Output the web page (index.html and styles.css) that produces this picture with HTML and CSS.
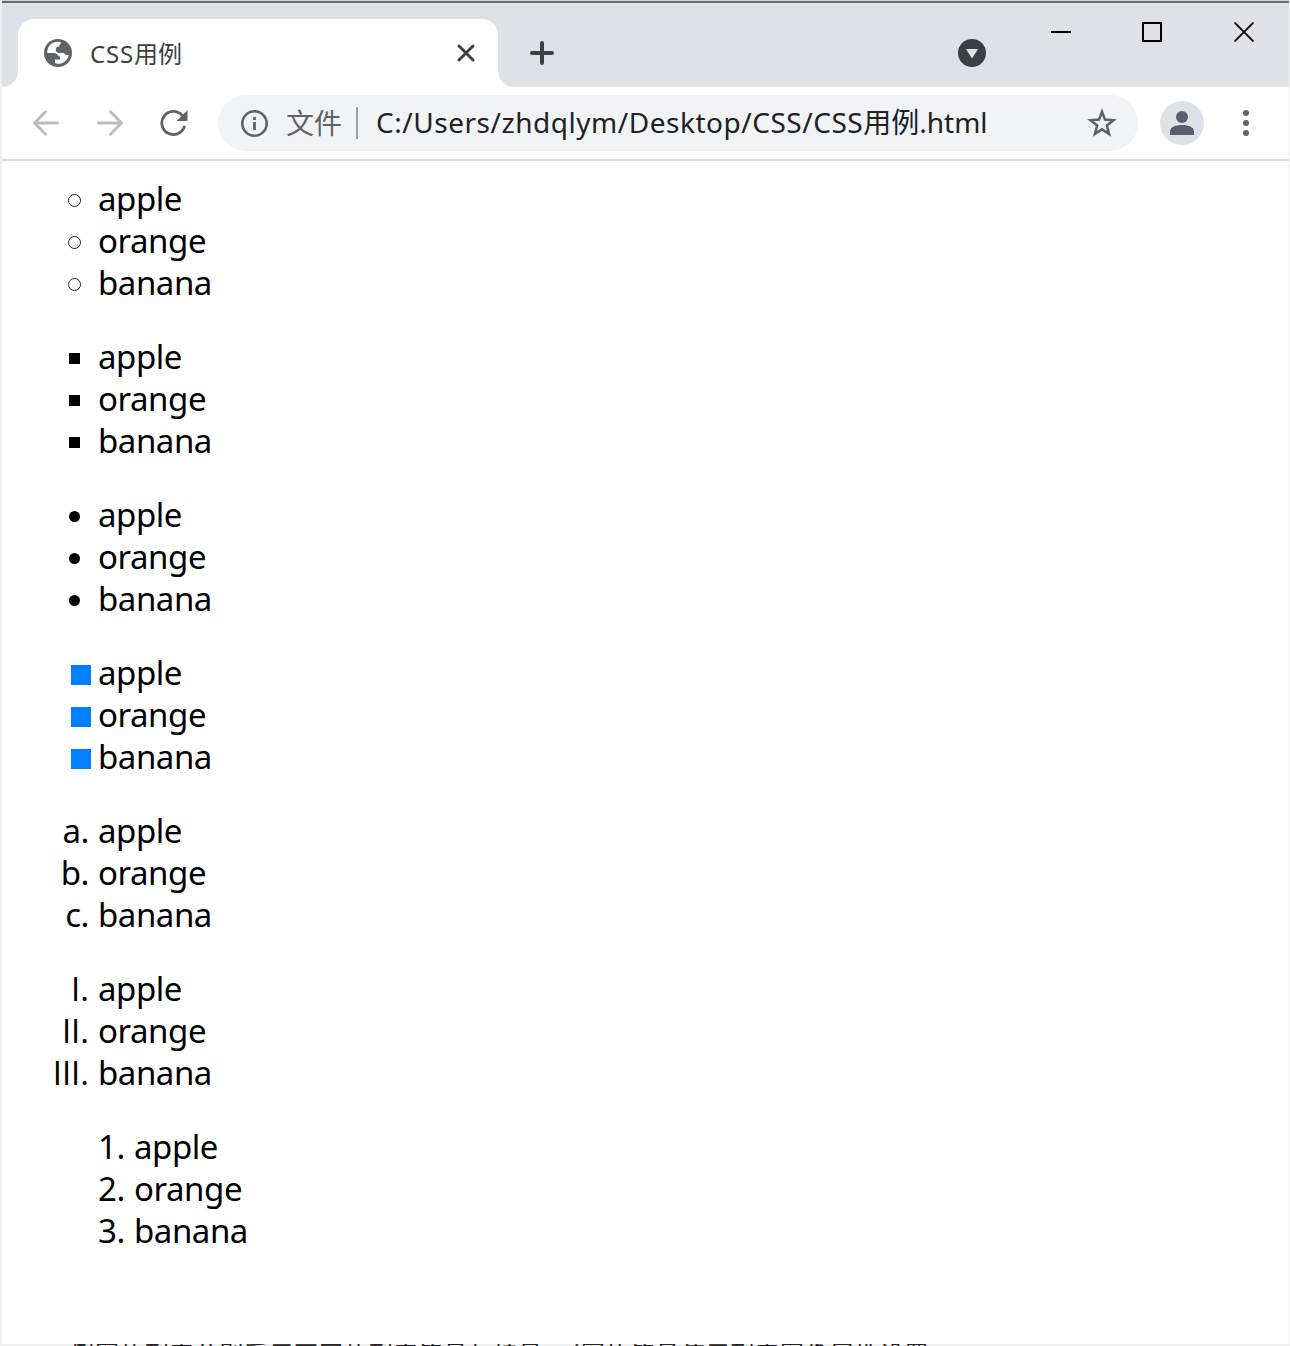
FILE: index.html
```html
<!DOCTYPE html>
<html lang="zh-CN">
<head>
<meta charset="utf-8">
<title>CSS用例</title>
<link rel="stylesheet" href="styles.css">
</head>
<body>
<div class="window">
  <header class="titlebar">
    <div class="tab-space"><i class="curve curve-left"></i></div>
    <div class="tab">
      <svg class="globe" width="28" height="28" viewBox="0 0 28 28"><circle cx="14" cy="14" r="14" fill="#5f6368"/><path d="M17.3 3.4C13 2 8 3.2 5.2 7 3.8 9 3.2 11.3 3.200 14H9.500c2.600 0 4.600 1.200 5 3.600H16v2.900h-5v3.800c6 1.700 12.500-1.800 13.900-8.400-1.900.5-3.800.2-4.900-1.900h-4.900c-2 0-3.300-1.200-3.300-3.200 0-2.100 1.200-3.200 3.600-3.200V6.200z" fill="#fff"/></svg>
      <span class="tab-title"><span class="latin">CSS</span>用例</span>
      <svg class="tab-close" width="18" height="18" viewBox="0 0 18 18"><path d="M2 2l14 14M16 2L2 16" stroke="#3c4043" stroke-width="2.900" stroke-linecap="round"/></svg>
    </div>
    <div class="tab-space"><i class="curve curve-right"></i></div>
    <svg class="new-tab" width="24" height="24" viewBox="0 0 24 24"><path d="M12 2v20M2 12h20" stroke="#3c4043" stroke-width="4" stroke-linecap="round"/></svg>
    <svg class="tab-search" width="28" height="28" viewBox="0 0 28 28"><circle cx="14" cy="14" r="14" fill="#3c4043"/><path d="M8 10h12l-6 9.500z" fill="#dee1e6"/></svg>
    <div class="controls">
      <svg width="20" height="20" viewBox="0 0 20 20"><path d="M0 10h20" stroke="#000" stroke-width="2"/></svg>
      <svg class="maximize" width="20" height="20" viewBox="0 0 20 20"><path d="M1 1h18v18H1z" fill="none" stroke="#000" stroke-width="2"/></svg>
      <svg width="20" height="20" viewBox="0 0 20 20"><path d="M.5.5l19 19m0-19l-19 19" stroke="#000" stroke-width="1.900"/></svg>
    </div>
  </header>
  <nav class="toolbar">
    <svg class="back" width="26" height="26" viewBox="0 0 26 26"><path d="M24.600 13H1.800M12.500 1.700L1.500 13l11 11.300" fill="none" stroke="#babcbe" stroke-width="2.800" stroke-linecap="round"/></svg>
    <svg class="forward" width="26" height="26" viewBox="0 0 26 26"><path d="M1.400 13h22.800M13.500 1.700L24.500 13l-11 11.300" fill="none" stroke="#babcbe" stroke-width="2.800" stroke-linecap="round"/></svg>
    <svg class="reload" width="28" height="28" viewBox="0 0 28 28"><path d="M22.300 6.500A11.600 11.600 0 1 0 24.300 18" fill="none" stroke="#5f6368" stroke-width="2.800" stroke-linecap="round"/><path d="M27.500 1v11H16.500z" fill="#5f6368"/></svg>
    <div class="omnibox">
      <svg class="info" width="28" height="28" viewBox="0 0 28 28"><circle cx="14.500" cy="14.500" r="12.200" fill="none" stroke="#5f6368" stroke-width="2.600"/><path d="M14.500 8v3M14.500 13v8" stroke="#5f6368" stroke-width="2.800"/></svg>
      <span class="scheme">文件</span>
      <i class="divider"></i>
      <span class="url"><span class="path">C:/Users/zhdqlym/Desktop/CSS/CSS</span>用例<span class="ext">.html</span></span>
      <svg class="star" width="30" height="30" viewBox="0 0 30 30"><path d="M15 3.700l3 7.900 8.500.6-6.600 5.400 2.100 8.200L15 21.300l-7 4.500 2.100-8.200-6.600-5.400 8.500-.6z" fill="none" stroke="#5f6368" stroke-width="2.600"/></svg>
    </div>
    <svg class="avatar" width="44" height="44" viewBox="0 0 44 44"><circle cx="22" cy="22" r="22" fill="#dee1e6"/><circle cx="22" cy="16" r="6" fill="#575f70"/><path d="M10 34v-3.500c0-4.500 6-6.500 12-6.500s12 2 12 6.500V34z" fill="#575f70"/></svg>
    <svg class="menu" width="8" height="28" viewBox="0 0 8 28"><g fill="#5f6368"><circle cx="4" cy="4" r="3"/><circle cx="4" cy="14" r="3"/><circle cx="4" cy="24" r="3"/></g></svg>
  </nav>
  <main class="page">
    <ul class="list">
      <li><i class="mark circle"></i>apple</li><li><i class="mark circle"></i>orange</li><li><i class="mark circle"></i>banana</li>
    </ul>
    <ul class="list">
      <li><i class="mark square"></i>apple</li><li><i class="mark square"></i>orange</li><li><i class="mark square"></i>banana</li>
    </ul>
    <ul class="list">
      <li><i class="mark disc"></i>apple</li><li><i class="mark disc"></i>orange</li><li><i class="mark disc"></i>banana</li>
    </ul>
    <ul class="list">
      <li><i class="mark image"></i>apple</li><li><i class="mark image"></i>orange</li><li><i class="mark image"></i>banana</li>
    </ul>
    <ol class="list">
      <li><span class="count">a.</span>apple</li><li><span class="count">b.</span>orange</li><li><span class="count">c.</span>banana</li>
    </ol>
    <ol class="list">
      <li><span class="count roman">I.</span>apple</li><li><span class="count roman">II.</span>orange</li><li><span class="count roman">III.</span>banana</li>
    </ol>
    <ol class="list inside">
      <li><span class="number">1.</span>apple</li><li><span class="number">2.</span>orange</li><li><span class="number">3.</span>banana</li>
    </ol>
  </main>
</div>
<footer class="behind">例图的列表分别采用不同的列表符号与编号，（图片符号使用列表图像属性设置。</footer>
</body>
</html>
```
FILE: styles.css
```css
* { box-sizing: border-box; }
body { margin: 0; height: 1346px; overflow: hidden; background: #f0f0f0; font-family: "Noto Sans", "Noto Sans CJK SC", sans-serif; color: #000; }
svg { display: block; flex: none; }
.window { height: 1344px; margin: 0 1px 0 2px; background: #fff; border-top: 1px solid #d3d5d3; }
.titlebar { display: flex; height: 86px; background: #dee1e6; border-top: 2px solid #686c6b; }
.tab-space { width: 16px; flex: none; align-self: flex-end; height: 16px; background: #fff; }
.curve { display: block; width: 16px; height: 16px; background: #dee1e6; }
.curve-left { border-bottom-right-radius: 16px; }
.curve-right { border-bottom-left-radius: 16px; }
.tab { display: flex; align-items: center; width: 480px; height: 68px; margin-top: 16px; padding: 0 23px 0 26px; background: #fff; border-radius: 16px 16px 0 0; }
.tab-title { flex: 1; margin-left: 18px; padding-top: 2px; font-size: 24px; line-height: 32px; color: #3c4043; white-space: nowrap; }
.latin { letter-spacing: .8px; }
.new-tab { margin: 38px 0 0 16px; }
.tab-search { margin: 36px 0 0 404px; }
.controls { display: flex; gap: 72px; margin: 19px 0 0 65px; }
.maximize { margin-left: -1px; }
.toolbar { display: flex; align-items: center; height: 74px; border-bottom: 2px solid #dcdce0; }
.back { margin-left: 31px; }
.forward { margin-left: 38px; }
.reload { margin-left: 37px; }
.omnibox { display: flex; align-items: center; width: 920px; height: 56px; margin-left: 30px; border-radius: 28px; background: #f1f3f4; font-size: 28px; line-height: 40px; white-space: nowrap; }
.info { margin-left: 22px; }
.scheme { margin-left: 18px; width: 56px; color: #5f6368; }
.divider { width: 2px; height: 32px; margin-left: 14px; background: #9aa0a6; }
.url { flex: 1; margin: -2px 0 0 18px; color: #202124; }
.path { letter-spacing: .53px; }
.star { margin-right: 21px; }
.avatar { margin-left: 22px; }
.menu { margin-left: 38px; }
.page { padding-top: 17px; }
.list { list-style: none; margin: 0 0 32px; padding-left: 40px; font-size: 33px; line-height: 42px; letter-spacing: -.45px; }
.list li { display: flex; align-items: center; height: 42px; }
.mark { flex: none; width: 11px; height: 11px; margin: 3px 18px 0 27px; }
.circle { width: 13px; height: 13px; margin: 3px 17px 0 26px; border: 1px solid #222; border-radius: 50%; }
.square { background: #000; }
.disc { background: #000; border-radius: 50%; }
.image { width: 20px; height: 20px; margin: 3px 7px 0 29px; background: #0080ff; }
.count { width: 47px; margin-right: 9px; text-align: right; }
.roman { font-family: "Open Sans", sans-serif; letter-spacing: 0; }
.inside { padding-left: 96px; }
.number { width: 36px; }
.behind { height: 2px; overflow: hidden; padding-left: 70px; font-size: 24px; line-height: 20px; letter-spacing: .9px; color: #222; white-space: nowrap; }
```
